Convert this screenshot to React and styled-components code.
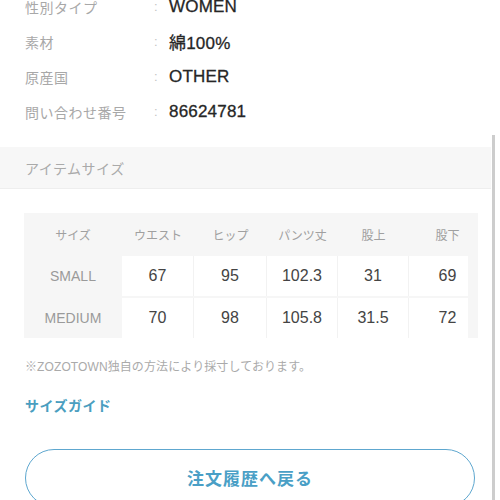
import styled, { createGlobalStyle } from "styled-components"

const Global = createGlobalStyle`
  html, body {
    margin: 0;
    padding: 0;
    background: #fff;
    overflow: hidden;
  }
  body {
    font-family: "Liberation Sans", "Noto Sans CJK JP", sans-serif;
    color: #333;
  }
`

const Page = styled.div`
  width: 500px;
  height: 500px;
  overflow: hidden;
  position: relative;
`

const Specs = styled.dl`
  margin: -11px 0 0;
  padding: 0 25px;
`

const SpecRow = styled.div`
  display: flex;
  align-items: center;
  height: 35px;
`

const SpecLabel = styled.dt`
  width: 129px;
  font-size: 14px;
  color: #a8a8a8;
  letter-spacing: 0.5px;
`

const Colon = styled.span`
  width: 15px;
  font-size: 13px;
  color: #c4c4c4;
`

const SpecValue = styled.dd`
  margin: 0;
  font-size: 17px;
  color: #262626;
  letter-spacing: 0.2px;
  -webkit-text-stroke: 0.3px #262626;
`

const Band = styled.div`
  margin: 18px 9px 0 0;
  height: 41px;
  display: flex;
  align-items: center;
  padding: 0 25px;
  background: #f7f7f7;
  border-bottom: 1px solid #eee;
  font-size: 14px;
  color: #aaa;
  letter-spacing: 0.5px;
`

const Section = styled.div`
  padding: 24px 22px 0 24px;
`

const Table = styled.div`
  background: #f6f6f6;
  padding-right: 10px;
`

const TableRow = styled.div`
  display: grid;
  grid-template-columns: 98px 72px 73px 71px 71px 59px;
  height: ${p => p.head ? "43px" : "40px"};
  margin-bottom: ${p => p.gap ? "2px" : "0"};
`

const HeadCell = styled.div`
  display: flex;
  align-items: center;
  justify-content: center;
  font-size: 12px;
  color: #a0a0a0;
  padding-left: ${p => p.last ? "18px" : "0"};
`

const RowLabel = styled.div`
  display: flex;
  align-items: center;
  justify-content: center;
  font-size: 14px;
  color: #9a9a9a;
`

const Cell = styled.div`
  display: flex;
  align-items: center;
  justify-content: center;
  background: #fff;
  border-right: ${p => p.last ? "none" : "1px solid #f2f2f2"};
  font-size: 16px;
  color: #444;
  padding-left: ${p => p.last ? "18px" : "0"};
`

const Note = styled.p`
  margin: 19px 0 0 25px;
  font-size: 12px;
  color: #aaa;
  letter-spacing: 0.1px;
`

const GuideLink = styled.a`
  display: block;
  margin: 21px 0 0 25px;
  font-size: 14px;
  font-weight: bold;
  color: #4a9ec0;
  text-decoration: none;
  letter-spacing: 0.5px;
`

const BackButton = styled.button`
  display: block;
  margin: 34px 0 0 25px;
  width: 450px;
  height: 58px;
  border: 1px solid #5ea7cf;
  border-radius: 29px;
  background: #fff;
  font-family: inherit;
  font-size: 17px;
  font-weight: bold;
  color: #4a9fc6;
  letter-spacing: 1px;
  padding-bottom: 2px;
`

const ScrollThumb = styled.div`
  position: absolute;
  top: 135px;
  right: 5px;
  width: 3px;
  height: 365px;
  background: #cdcdcd;
`

const specs = [
  ["性別タイプ", "WOMEN"],
  ["素材", "綿100%"],
  ["原産国", "OTHER"],
  ["問い合わせ番号", "86624781"],
]

const heads = ["サイズ", "ウエスト", "ヒップ", "パンツ丈", "股上", "股下"]

const sizes = [
  ["SMALL", "67", "95", "102.3", "31", "69"],
  ["MEDIUM", "70", "98", "105.8", "31.5", "72"],
]

const App = () => {
  return (
    <Page>
      <Global />
      <Specs>
        {specs.map(([label, value]) =>
          <SpecRow key={label}>
            <SpecLabel>{label}</SpecLabel>
            <Colon>:</Colon>
            <SpecValue>{value}</SpecValue>
          </SpecRow>
        )}
      </Specs>

      <Band>アイテムサイズ</Band>

      <Section>
        <Table>
          <TableRow head>
            {heads.map((h, i) =>
              <HeadCell key={h} last={i === heads.length - 1}>{h}</HeadCell>
            )}
          </TableRow>
          {sizes.map((row, r) =>
            <TableRow key={row[0]} gap={r === 0}>
              <RowLabel>{row[0]}</RowLabel>
              {row.slice(1).map((v, i) =>
                <Cell key={i} last={i === row.length - 2}>{v}</Cell>
              )}
            </TableRow>
          )}
        </Table>
      </Section>

      <Note>※ZOZOTOWN独自の方法により採寸しております。</Note>
      <GuideLink href="#">サイズガイド</GuideLink>
      <BackButton>注文履歴へ戻る</BackButton>

      <ScrollThumb />
    </Page>
  );
}

export default App;
